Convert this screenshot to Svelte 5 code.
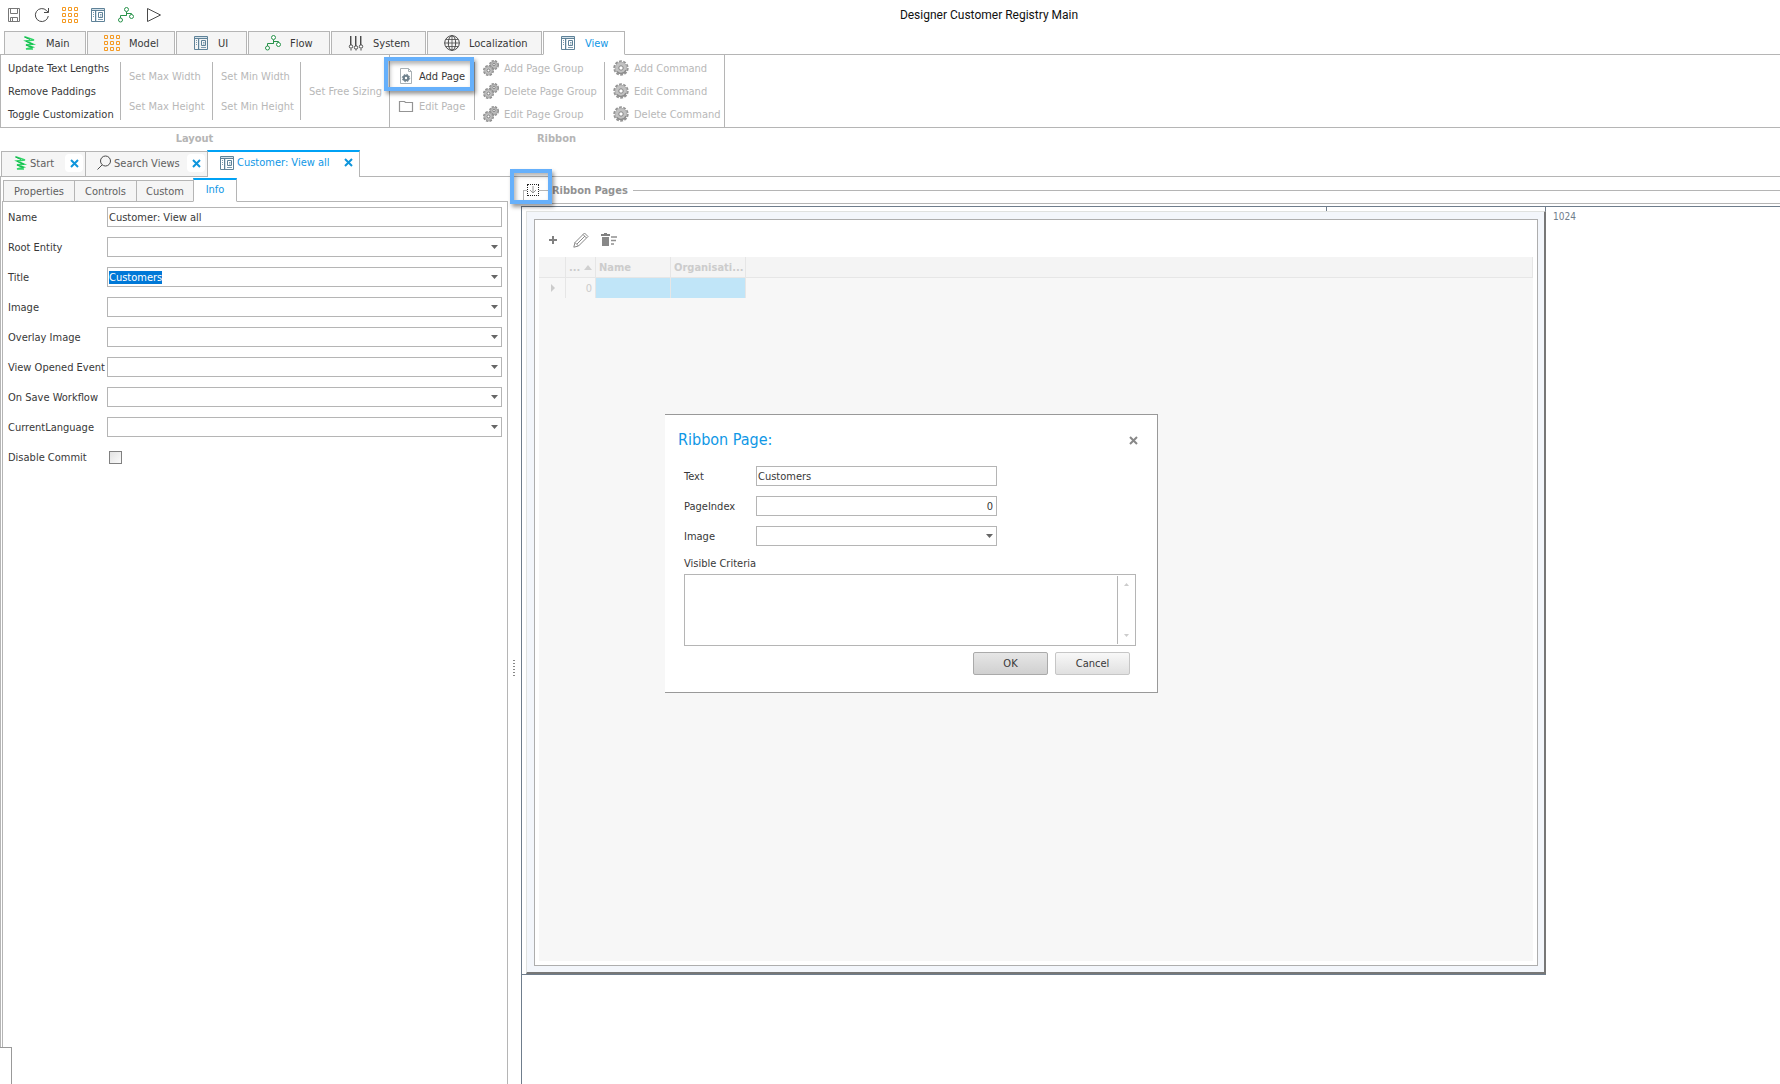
<script>
  import { onMount } from 'svelte';

  const ribbonTabs = [
    { label: 'Main', icon: 'logo' },
    { label: 'Model', icon: 'model' },
    { label: 'UI', icon: 'form' },
    { label: 'Flow', icon: 'flow' },
    { label: 'System', icon: 'sliders' },
    { label: 'Localization', icon: 'globe' },
    { label: 'View', icon: 'form', active: true }
  ];
  const quick = [
    ['Save', 'save'],
    ['Refresh', 'refresh'],
    ['Model', 'model'],
    ['UI', 'form'],
    ['Flow', 'flow'],
    ['Run', 'play']
  ];
  const docs = [
    { label: 'Start', icon: 'logo' },
    { label: 'Search Views', icon: 'search' },
    { label: 'Customer: View all', icon: 'form', active: true }
  ];
  const panes = ['Properties', 'Controls', 'Custom', 'Info'];
  const emptyFields = [
    'Image',
    'Overlay Image',
    'View Opened Event',
    'On Save Workflow',
    'CurrentLanguage'
  ];

  let titleInput;
  onMount(() => {
    titleInput.focus();
    titleInput.select();
  });
</script>

{#snippet icon(name)}
  <svg class="icon" viewBox="0 0 16 16" width="16" height="16" fill="none" aria-hidden="true">
    {#if name === 'logo'}
      <path d="M3.500 1.800 13 5 5 6 12 9.200 5 9.800 11.500 12.200 5 14H12" stroke="#2fd566" stroke-width="1.600" />
      <path d="M3.500 2 9 4.500M5 6.200 12 9.400M5 10 11.500 12.400" stroke="#12b34c" stroke-width="1" />
    {:else if name === 'model'}
      <path
        d="M.5.5h3v3h-3zM6.5.5h3v3h-3zM12.500.5h3v3h-3zM.5 6.500h3v3h-3zM6.500 6.500h3v3h-3zM12.500 6.500h3v3h-3zM.5 12.500h3v3h-3zM6.500 12.500h3v3h-3zM12.500 12.500h3v3h-3z"
        stroke="#f59a23"
      />
    {:else if name === 'form'}
      <path d="M2 2h12v2H2zM6 4h1v10H6z" fill="#d3e1ea" />
      <path d="M1.500 1.500h13v13h-13zM1.500 3.500h13M5.500 3.500v11" stroke="#5f8298" />
      <path d="M3 5.500h1M3 7.500h1M3 9.500h1M8 12.500h5" stroke="#7d9bae" />
      <path d="M8.500 5.500h4v5h-4z" stroke="#5f8298" />
      <path d="M10 7.500h1.500M10 9h1.500" stroke="#7d9bae" />
    {:else if name === 'flow'}
      <path d="M8.500 5v3.500M2.500 11.500v-3h6v-2h5v2" stroke="#27924a" />
      <g stroke="#27924a" fill="#fff">
        <circle cx="8.500" cy="2.500" r="2" />
        <circle cx="2.500" cy="13" r="2" />
        <circle cx="13.500" cy="9.500" r="2" />
      </g>
    {:else if name === 'sliders'}
      <path d="M2.500 1v9M7.500 1v10M12.500 1v9M3 14v1.500M8 14.500v1M13 14v1.500" stroke="#4a4a4a" />
      <path d="M3.500 1v9M8.500 1v10M13.500 1v9" stroke="#aaa" />
      <g stroke="#4a4a4a" fill="#fff">
        <circle cx="3" cy="11.500" r="1.700" />
        <circle cx="8" cy="12.500" r="1.700" />
        <circle cx="13" cy="11.500" r="1.700" />
      </g>
    {:else if name === 'globe'}
      <g stroke="#4a4a4a">
        <circle cx="8" cy="8" r="7.300" />
        <ellipse cx="8" cy="8" rx="3.700" ry="7.300" />
        <path d="M8 .5v15M.5 8h15M2 4.500h12M2 11.500h12" stroke-width=".8" />
      </g>
    {:else if name === 'save'}
      <path d="M2.500 1.500h11v13h-11zM4.500 1.500v5h7v-5M4.500 14.500v-4h7v4M6.500 11v3" stroke="#777" />
    {:else if name === 'refresh'}
      <path d="M14.300 9A6.500 6.500 0 1 1 12.500 3.500L14 5.200M14.500 1v4.500H10" stroke="#4a4a4a" />
    {:else if name === 'play'}
      <path d="M1.500 1.500v13L14.500 8z" stroke="#4a4a4a" />
    {:else if name === 'search'}
      <circle cx="9.500" cy="6" r="5" stroke="#4a4a4a" />
      <path d="M6 10 1.500 14.500" stroke="#4a4a4a" />
    {:else if name === 'page'}
      <path d="M2.500.5h8l3 3v12h-11zM10.500.5v3h3" stroke="#a9b0b4" />
      <circle cx="8" cy="10" r="3.300" fill="#6d7f8b" />
      <circle cx="8" cy="10" r="3.700" stroke="#6d7f8b" stroke-dasharray="1.600 1.300" />
      <circle cx="8" cy="10" r="1.200" fill="#fff" />
    {:else if name === 'folder'}
      <path d="M1.500 3.500h5l1 1h7v9h-13z" stroke="#949494" stroke-width="1.200" />
    {:else if name === 'gear'}
      <circle cx="8" cy="8" r="6.700" stroke="#959595" stroke-width="2" stroke-dasharray="2.800 1.400" />
      <circle cx="8" cy="8" r="5.800" fill="#c2c2c2" stroke="#b0b0b0" />
      <path d="M4 11.500A5.300 5.300 0 0 0 13 10" stroke="#8c8c8c" stroke-width="1.500" />
      <circle cx="8" cy="8" r="2.200" fill="#fff" stroke="#858585" />
    {:else if name === 'gears'}
      <circle cx="11" cy="5" r="4" stroke="#8d8d8d" stroke-width="2" stroke-dasharray="2.200 1" />
      <circle cx="11" cy="5" r="3.500" fill="#bbb" stroke="#a5a5a5" />
      <circle cx="11" cy="4.500" r="1.200" fill="#eee" stroke="#888" />
      <circle cx="5.500" cy="10.500" r="4.500" stroke="#8a8a8a" stroke-width="2" stroke-dasharray="2.400 1.100" />
      <circle cx="5.500" cy="10.500" r="3.900" fill="#c0c0c0" stroke="#a8a8a8" />
      <circle cx="5.500" cy="10.500" r="1.400" fill="#fff" stroke="#808080" />
    {:else if name === 'plus'}
      <path d="M8 4v8M4 8h8" stroke="#808080" stroke-width="2" />
    {:else if name === 'pencil'}
      <path d="M.8 15.200 2 10.500 11.500 1 15 4.500 5.500 14zM2 10.500 5.500 14M10 2.500 13.500 6M4 12 12 4" stroke="#888" />
    {:else if name === 'trash'}
      <path d="M0 3h9M3 2h3" stroke="#808080" stroke-width="2" />
      <path d="M10 5h6M10 8.500h5M10 12h3" stroke="#909090" stroke-width="1.500" />
      <path d="M1 5h7v9h-7z" fill="#888" />
    {/if}
  </svg>
{/snippet}

{#snippet cross()}
  <svg viewBox="0 0 9 9" width="9" height="9" aria-hidden="true">
    <path d="M1 1l7 7M8 1 1 8" stroke="currentColor" stroke-width="2" fill="none" />
  </svg>
{/snippet}

{#snippet arrow()}
  <svg class="arrow" viewBox="0 0 7 4" width="7" height="4" aria-hidden="true">
    <path d="M0 0h7L3.500 4z" fill="#666" />
  </svg>
{/snippet}

{#snippet command(label, image, enabled)}
  <button class="command" disabled={!enabled}>
    {#if image}{@render icon(image)}{/if}<span>{label}</span>
  </button>
{/snippet}

<div class="app">
  <header class="titlebar">
    <div class="quick">
      {#each quick as [label, image]}
        <button aria-label={label}>{@render icon(image)}</button>
      {/each}
    </div>
    <h1>Designer Customer Registry Main</h1>
  </header>

  <nav class="ribbon-tabs">
    {#each ribbonTabs as tab}
      <button class:active={tab.active}>{@render icon(tab.icon)}<span>{tab.label}</span></button>
    {/each}
  </nav>

  <section class="ribbon">
    <div class="group layout-group">
      <div class="stack">
        {@render command('Update Text Lengths', null, true)}
        {@render command('Remove Paddings', null, true)}
        {@render command('Toggle Customization', null, true)}
      </div>
      <div class="stack two">
        {@render command('Set Max Width', null, false)}
        {@render command('Set Max Height', null, false)}
      </div>
      <div class="stack two">
        {@render command('Set Min Width', null, false)}
        {@render command('Set Min Height', null, false)}
      </div>
      <div class="stack">
        {@render command('Set Free Sizing', null, false)}
      </div>
    </div>
    <div class="group page-group">
      <div class="stack two">
        <div class="marked">
          {@render command('Add Page', 'page', true)}
          <span class="mark mark-wide"></span>
        </div>
        {@render command('Edit Page', 'folder', false)}
      </div>
      <div class="stack">
        {@render command('Add Page Group', 'gears', false)}
        {@render command('Delete Page Group', 'gears', false)}
        {@render command('Edit Page Group', 'gears', false)}
      </div>
      <div class="stack">
        {@render command('Add Command', 'gear', false)}
        {@render command('Edit Command', 'gear', false)}
        {@render command('Delete Command', 'gear', false)}
      </div>
    </div>
  </section>
  <div class="captions">
    <span>Layout</span>
    <span>Ribbon</span>
  </div>

  <nav class="doc-tabs">
    {#each docs as doc}
      <div class="doc" class:active={doc.active}>
        <button class="doc-name">{@render icon(doc.icon)}<span>{doc.label}</span></button>
        <button class="doc-close" aria-label="Close {doc.label}">{@render cross()}</button>
      </div>
    {/each}
  </nav>

  <main>
    <aside class="side">
      <nav class="pane-tabs">
        {#each panes as pane}
          <button class:active={pane === 'Info'}>{pane}</button>
        {/each}
      </nav>
      <form class="fields">
        <label for="name">Name</label>
        <input id="name" class="edit" type="text" value="Customer: View all" />

        <label for="root">Root Entity</label>
        <div class="combo"><select id="root"><option></option></select>{@render arrow()}</div>

        <label for="title">Title</label>
        <div class="combo">
          <input id="title" class="edit" type="text" value="Customers" bind:this={titleInput} />
          <button type="button" class="drop" aria-label="Open title list">{@render arrow()}</button>
        </div>

        {#each emptyFields as field, i}
          <label for="field-{i}">{field}</label>
          <div class="combo"><select id="field-{i}"><option></option></select>{@render arrow()}</div>
        {/each}

        <label for="disable">Disable Commit</label>
        <input id="disable" class="check" type="checkbox" />
      </form>
    </aside>

    <div class="splitter"><i></i></div>

    <section class="designer">
      <div class="legend">
        <i class="corner"></i>
        <div class="marked">
          <button class="expand" aria-label="Expand ribbon pages">
            <svg viewBox="0 0 8 8" width="8" height="8" aria-hidden="true">
              <path d="M4 0v7M1 4l3 3 3-3" stroke="#999" fill="none" />
            </svg>
          </button>
          <span class="mark mark-square"></span>
        </div>
        <i class="dash"></i>
        <h2>Ribbon Pages</h2>
        <i class="rule"></i>
      </div>

      <div class="canvas">
        <div class="stage">
          <i class="tick"></i>
          <div class="frame">
            <div class="view">
              <div class="tools">
                <button aria-label="Add">{@render icon('plus')}</button>
                <button aria-label="Edit">{@render icon('pencil')}</button>
                <button aria-label="Delete">{@render icon('trash')}</button>
              </div>
              <div class="grid">
                <table>
                  <thead>
                    <tr>
                      <th class="c-mark"></th>
                      <th class="c-index">
                        <div class="sort">
                          <span>...</span>
                          <svg viewBox="0 0 8 5" width="8" height="5" aria-hidden="true"><path d="M0 5h8L4 0z" fill="#d0d0d0" /></svg>
                        </div>
                      </th>
                      <th class="c-data">Name</th>
                      <th class="c-data">Organisati...</th>
                      <th></th>
                    </tr>
                  </thead>
                  <tbody>
                    <tr>
                      <td class="pointer"><svg viewBox="0 0 4 8" width="4" height="8" aria-hidden="true"><path d="M0 0v8l4-4z" fill="#ccc" /></svg></td>
                      <td class="number">0</td>
                      <td class="filled"></td>
                      <td class="filled"></td>
                      <td class="rest"></td>
                    </tr>
                  </tbody>
                </table>
              </div>
            </div>
          </div>

          <div class="dialog" role="dialog" aria-labelledby="dialog-title">
            <div class="dialog-head">
              <h2 id="dialog-title">Ribbon Page:</h2>
              <button aria-label="Close dialog">{@render cross()}</button>
            </div>
            <form class="dialog-fields">
              <label for="page-text">Text</label>
              <input id="page-text" class="edit" type="text" value="Customers" />
              <label for="page-index">PageIndex</label>
              <input id="page-index" class="edit end" type="text" value="0" />
              <label for="page-image">Image</label>
              <div class="combo"><select id="page-image"><option></option></select>{@render arrow()}</div>
            </form>
            <label class="criteria-label" for="criteria">Visible Criteria</label>
            <div class="criteria">
              <textarea id="criteria"></textarea>
              <div class="scroll">
                <svg viewBox="0 0 5 3" width="5" height="3" aria-hidden="true"><path d="M0 3h5L2.500 0z" fill="#ccc" /></svg>
                <svg viewBox="0 0 5 3" width="5" height="3" aria-hidden="true"><path d="M0 0h5L2.500 3z" fill="#ccc" /></svg>
              </div>
            </div>
            <div class="actions">
              <button class="primary">OK</button>
              <button>Cancel</button>
            </div>
          </div>
        </div>
        <span class="ruler">1024</span>
      </div>
    </section>
  </main>
  <div class="dock"></div>
</div>

<style>
  :global(body) {
    background: #fff;
  }
  .app {
    --line: #b5b5b5;
    --slate: #6f7d8c;
    --blue: #0f97e6;
    position: relative;
    display: flex;
    flex-direction: column;
    min-height: 100vh;
    overflow: hidden;
    color: #383838;
    font-family: 'DejaVu Sans Condensed', 'DejaVu Sans', 'Noto Sans', sans-serif;
    font-size: 11px;
    line-height: 13px;
  }
  .app :global(*) {
    box-sizing: border-box;
  }
  button,
  input,
  select,
  textarea {
    margin: 0;
    padding: 0;
    border: 0;
    border-radius: 0;
    background: none;
    color: inherit;
    font: inherit;
    outline: none;
  }
  button {
    white-space: nowrap;
  }
  svg {
    display: block;
    flex: none;
  }
  h1,
  h2 {
    margin: 0;
  }

  .titlebar {
    display: flex;
    align-items: center;
    height: 31px;
    padding-bottom: 1px;
  }
  .quick {
    display: flex;
    gap: 12px;
    flex: 0 0 198px;
    padding-left: 6px;
  }
  h1 {
    flex: 1;
    color: #111;
    font: 12px/16px Roboto, 'Open Sans', sans-serif;
    text-align: center;
  }

  .ribbon-tabs {
    position: relative;
    z-index: 1;
    display: grid;
    grid-template-columns: 82px 88px 71px 82px 95px 115px 82px;
    gap: 1px;
    height: 24px;
    margin-bottom: -1px;
    padding-left: 4px;
  }
  .ribbon-tabs button {
    display: flex;
    align-items: center;
    gap: 9px;
    padding-left: 16px;
    border: 1px solid var(--line);
    background: #f5f5f5;
  }
  .ribbon-tabs .active {
    border-bottom-color: #fff;
    background: #fff;
    color: var(--blue);
  }

  .ribbon {
    display: flex;
    height: 74px;
    border: solid var(--line);
    border-width: 1px 0;
  }
  .group {
    display: grid;
    grid-template-rows: minmax(0, 1fr);
    padding: 7px 0;
    border-right: 1px solid var(--line);
  }
  .layout-group {
    grid-template-columns: 120px 92px 88px 88px;
    border-left: 1px solid var(--line);
  }
  .page-group {
    grid-template-columns: 85px 130px 119px;
  }
  .stack {
    display: flex;
    flex-direction: column;
    justify-content: center;
    gap: 7px;
    padding-left: 8px;
    border-right: 1px solid var(--line);
  }
  .layout-group .stack:first-child {
    padding-left: 7px;
  }
  .stack:last-child {
    border-right: 0;
  }
  .two {
    gap: 14px;
  }
  .command {
    display: flex;
    align-items: center;
    flex: none;
    gap: 5px;
    height: 16px;
  }
  .command:disabled {
    color: #b8b8b8;
  }
  .marked {
    position: relative;
  }
  .mark {
    position: absolute;
    border: 4px solid #66b0fb;
    box-shadow:
      2px 3px 4px rgba(0, 0, 0, 0.4),
      inset 2px 3px 4px rgba(0, 0, 0, 0.3);
    pointer-events: none;
  }
  .mark-wide {
    inset: -11px 0 -7px -14px;
  }
  .mark-square {
    inset: -15px -13px -8px -17px;
  }

  .captions {
    display: grid;
    grid-template-columns: 389px 335px;
    height: 22px;
    align-items: center;
    padding-bottom: 2px;
    color: #b5b5b5;
    font-weight: bold;
    text-align: center;
  }

  .doc-tabs {
    display: flex;
    align-items: flex-end;
    height: 27px;
    padding-left: 1px;
    border-bottom: 1px solid var(--line);
  }
  .doc {
    display: flex;
    align-items: center;
    justify-content: space-between;
    flex: 0 0 85px;
    height: 25px;
    padding: 0 2px 2px 10px;
    border: 1px solid var(--line);
    border-bottom: 0;
    background: #f5f5f5;
    color: #606060;
  }
  .doc + .doc {
    flex-basis: 123px;
    margin-left: -1px;
  }
  .doc + .doc.active {
    flex-basis: 153px;
    height: 27px;
    margin-bottom: -1px;
    padding: 0 2px 4px 11px;
    border-top: 2px solid #00a2f5;
    background: #fff;
    color: var(--blue);
  }
  .doc-name {
    display: flex;
    align-items: center;
    gap: 2px;
  }
  .doc-close {
    display: grid;
    place-items: center;
    width: 18px;
    height: 18px;
    border-radius: 4px;
    background: #fff;
    color: #0e95dc;
  }

  main {
    display: flex;
    flex: 1;
  }
  .side {
    display: flex;
    flex-direction: column;
    flex: 0 0 508px;
    padding: 1px 0 0 1px;
    border-left: 1px solid var(--line);
  }
  .pane-tabs {
    display: grid;
    grid-template-columns: 71px 62px 57px 43px;
    align-items: end;
    height: 24px;
    margin-bottom: -1px;
    padding-left: 1px;
    z-index: 1;
  }
  .pane-tabs button {
    height: 22px;
    margin-right: -1px;
    border: 1px solid var(--line);
    background: #f5f5f5;
    color: #606060;
  }
  .pane-tabs .active {
    height: 24px;
    padding-bottom: 2px;
    border-top: 2px solid #00a2f5;
    border-bottom-color: #fff;
    background: #fff;
    color: var(--blue);
  }
  .fields {
    display: grid;
    grid-template-columns: 99px 1fr;
    grid-auto-rows: 20px;
    align-items: center;
    align-content: start;
    row-gap: 10px;
    flex: 1;
    padding: 5px 5px 0;
    border: solid var(--line);
    border-width: 1px 1px 0;
  }
  .fields label {
    white-space: nowrap;
  }
  .edit,
  select {
    width: 100%;
    height: 20px;
    padding: 0 1px;
    border: 1px solid var(--line);
    background: #fff;
  }
  .edit::selection {
    background: #0078d7;
    color: #fff;
  }
  .end {
    padding-right: 3px;
    text-align: right;
  }
  .combo {
    display: grid;
    align-items: center;
  }
  .combo > :global(*) {
    grid-area: 1 / 1;
  }
  .combo > :global(.arrow) {
    justify-self: end;
    margin-right: 4px;
    pointer-events: none;
  }
  .drop {
    justify-self: end;
    padding: 4px;
  }
  select {
    appearance: none;
  }
  .check {
    width: 13px;
    height: 13px;
    margin-left: 2px;
    border: 1px solid #808080;
    background: linear-gradient(135deg, #e2e2e2, #fafafa);
    appearance: none;
  }

  .splitter {
    flex: 0 0 13px;
    padding: 483px 0 0 5px;
  }
  .splitter i {
    display: block;
    height: 16px;
    width: 2px;
    background: repeating-linear-gradient(#888 0 1px, #fff 1px 3px);
  }

  .designer {
    display: flex;
    flex-direction: column;
    flex: 1;
    min-width: 0;
  }
  .legend {
    display: flex;
    align-items: center;
    height: 26px;
    padding-left: 2px;
  }
  .corner {
    align-self: flex-end;
    width: 4px;
    height: 13px;
    border: solid var(--line);
    border-width: 1px 0 0 1px;
  }
  .expand {
    display: grid;
    place-items: center;
    width: 12px;
    height: 12px;
    border: 1px dotted #222;
  }
  .dash {
    width: 9px;
    height: 1px;
    background: var(--line);
  }
  .legend h2 {
    padding: 0 5px 0 4px;
    color: #929292;
    font-size: 11px;
    line-height: 13px;
  }
  .rule {
    flex: 1;
    height: 1px;
    background: var(--line);
  }
  .canvas {
    display: flex;
    align-items: flex-start;
    flex: 1;
    border-top: 1px solid var(--line);
    padding-top: 2px;
    background: linear-gradient(var(--slate), var(--slate)) 0 2px / 100% 1px no-repeat;
  }
  .canvas::before {
    content: '';
    align-self: stretch;
    flex: 0 0 1px;
    background: var(--slate);
  }
  .stage {
    position: relative;
    flex: 0 0 1024px;
    margin-top: 1px;
    padding: 4px 0 0 4px;
    border-bottom: 1px solid var(--slate);
    background: linear-gradient(var(--slate), var(--slate)) right top / 1px 4px no-repeat;
  }
  .tick {
    position: absolute;
    top: 0;
    right: 219px;
    width: 1px;
    height: 4px;
    background: var(--slate);
  }
  .frame {
    padding: 7px 6px 6px 7px;
    border: 1px solid #e0e2e0;
    border-right: 2px solid #777;
    border-bottom: 2px solid #777;
    background: #f3f6fb;
  }
  .view {
    padding: 0 4px 4px;
    border: 1px solid #aeaeae;
    background: #fff;
  }
  .tools {
    display: flex;
    align-items: center;
    gap: 12px;
    height: 37px;
    padding: 3px 0 0 6px;
  }
  .grid {
    min-height: 704px;
    background: #f7f7f7;
  }
  table {
    width: 100%;
    border-collapse: separate;
    border-spacing: 0;
    table-layout: fixed;
    color: #ccc;
  }
  th,
  td {
    height: 21px;
    padding: 0 3px;
    border-right: 1px solid #e6e6e6;
    text-align: left;
    white-space: nowrap;
  }
  th {
    border-bottom: 1px solid #e6e6e6;
    background: #f4f4f4;
  }
  td {
    height: 20px;
  }
  .c-mark {
    width: 27px;
  }
  .c-index {
    width: 30px;
  }
  .c-data {
    width: 75px;
  }
  .sort {
    display: flex;
    align-items: center;
    justify-content: space-between;
  }
  .pointer {
    padding-left: 12px;
  }
  .number {
    text-align: right;
  }
  .filled {
    background: #c0e5f8;
  }
  .rest {
    border-right: 0;
  }
  .ruler {
    padding: 4px 0 0 7px;
    color: var(--slate);
    font-size: 10px;
  }

  .dialog {
    position: absolute;
    top: 207px;
    left: 143px;
    width: 493px;
    padding: 13px 21px 17px 19px;
    border: 1px solid #999;
    border-left: 0;
    background: #fff;
  }
  .dialog-head {
    display: flex;
    align-items: center;
    justify-content: space-between;
    height: 24px;
    margin: 0 -2px 0 -6px;
    color: #888;
  }
  .dialog-head h2 {
    color: var(--blue);
    font-size: 16px;
    font-weight: normal;
    line-height: 20px;
  }
  .dialog-fields {
    display: grid;
    grid-template-columns: 72px 241px;
    grid-auto-rows: 20px;
    align-items: center;
    row-gap: 10px;
    margin: 14px 0 11px;
  }
  .criteria-label {
    display: block;
    margin-bottom: 4px;
  }
  .criteria {
    display: flex;
    height: 72px;
    padding: 1px;
    border: 1px solid var(--line);
  }
  textarea {
    flex: 1;
    resize: none;
  }
  .scroll {
    display: flex;
    flex-direction: column;
    align-items: center;
    justify-content: space-between;
    width: 17px;
    padding: 7px 0;
    border-left: 1px solid var(--line);
  }
  .actions {
    display: flex;
    justify-content: flex-end;
    gap: 7px;
    margin: 6px 6px 0 0;
  }
  .actions button {
    width: 75px;
    height: 23px;
    border: 1px solid #c6c6c6;
    border-radius: 2px;
    background: linear-gradient(#f8f8f8, #e0e0e0);
  }
  .actions .primary {
    border-color: #aaa;
    background: linear-gradient(#e6e6e6, #d0d0d0);
  }

  .dock {
    position: absolute;
    bottom: 0;
    left: 0;
    width: 12px;
    height: 37px;
    border: solid #999;
    border-width: 1px 1px 0 0;
    background: #fff;
  }
</style>
